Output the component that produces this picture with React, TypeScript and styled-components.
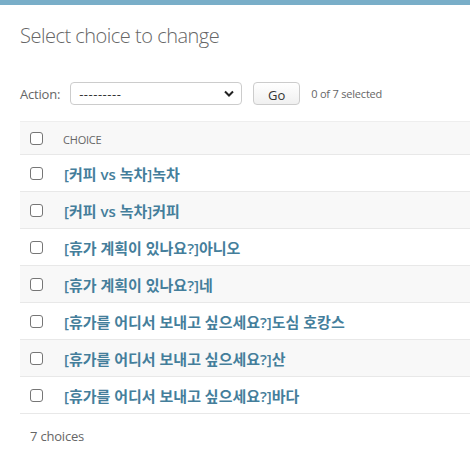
import React from "react";
import styled, { createGlobalStyle } from "styled-components";

const Global = createGlobalStyle`
  html, body { margin: 0; padding: 0; background: #fff; }
  body {
    font-family: "Open Sans", "Noto Sans CJK KR", "Noto Sans", sans-serif;
    font-size: 14px;
    color: #333;
    overflow: hidden;
  }
`;

const TopBar = styled.div`
  height: 5px;
  background: #79aec8;
`;

const Content = styled.div`
  padding: 20px 0 0 20px;
`;

const Title = styled.h1`
  margin: 0 0 35px;
  font-size: 20px;
  font-weight: 300;
  color: #666;
  line-height: 22px;
  letter-spacing: -0.5px;
`;

const Actions = styled.div`
  display: flex;
  align-items: center;
  height: 23px;
  margin-bottom: 16px;
  font-size: 13px;
  color: #666;
`;

const Label = styled.label`
  margin-right: 10px;
  letter-spacing: -0.2px;
`;

const SelectBox = styled.div`
  position: relative;
  width: 172px;
  height: 23px;
  box-sizing: border-box;
  border: 1px solid #ccc;
  border-radius: 4px;
  background: #fff;
  display: flex;
  align-items: center;
  padding-left: 8px;
  font-size: 13px;
  color: #333;
  letter-spacing: 0.5px;
`;

const Chevron = styled.svg`
  position: absolute;
  right: 7px;
  top: 7px;
`;

const GoButton = styled.button`
  margin-left: 11px;
  width: 47px;
  height: 23px;
  border: 1px solid #ccc;
  border-radius: 4px;
  background: linear-gradient(#fff, #f0f0f0);
  font-family: inherit;
  font-size: 13px;
  color: #333;
  padding: 2px 0 0;
`;

const Counter = styled.span`
  margin-left: 11px;
  font-size: 11px;
  color: #666;
  letter-spacing: -0.2px;
`;

const Table = styled.div`
  width: 470px;
  border-top: 1px solid #eee;
`;

const Row = styled.div<{ $alt?: boolean; $head?: boolean }>`
  display: flex;
  align-items: center;
  height: ${(p) => (p.$head ? 32 : 36)}px;
  background: ${(p) => (p.$alt ? "#f8f8f8" : "#fff")};
  border-bottom: 1px solid #e8e8e8;
`;

const Check = styled.span`
  width: 11px;
  height: 11px;
  margin-left: 10px;
  margin-right: 21px;
  border: 1px solid #767676;
  border-radius: 3px;
  background: #fff;
  flex: none;
`;

const HeadCell = styled.span`
  font-size: 11px;
  color: #666;
  text-transform: uppercase;
  padding-top: 2px;
  margin-left: -1px;
  letter-spacing: -0.2px;
`;

const Link = styled.a`
  font-size: 15px;
  font-weight: 600;
  color: #447e9b;
  text-decoration: none;
`;

const Footer = styled.div`
  padding: 13px 0 0 10px;
  font-size: 13px;
  color: #666;
  letter-spacing: -0.2px;
`;

const items = [
  "[커피 vs 녹차]녹차",
  "[커피 vs 녹차]커피",
  "[휴가 계획이 있나요?]아니오",
  "[휴가 계획이 있나요?]네",
  "[휴가를 어디서 보내고 싶으세요?]도심 호캉스",
  "[휴가를 어디서 보내고 싶으세요?]산",
  "[휴가를 어디서 보내고 싶으세요?]바다",
];

export default function App() {
  return (
    <>
      <Global />
      <TopBar />
      <Content>
        <Title>Select choice to change</Title>
        <Actions>
          <Label>Action:</Label>
          <SelectBox>
            ---------
            <Chevron width="10" height="7" viewBox="0 0 10 7">
              <path d="M1 1.5 L5 5.5 L9 1.5" fill="none" stroke="#222" strokeWidth="2" />
            </Chevron>
          </SelectBox>
          <GoButton>Go</GoButton>
          <Counter>0 of 7 selected</Counter>
        </Actions>
        <Table>
          <Row $head $alt>
            <Check />
            <HeadCell>Choice</HeadCell>
          </Row>
          {items.map((t, i) => (
            <Row key={i} $alt={i % 2 === 1}>
              <Check />
              <Link href="#">{t}</Link>
            </Row>
          ))}
        </Table>
        <Footer>7 choices</Footer>
      </Content>
    </>
  );
}
